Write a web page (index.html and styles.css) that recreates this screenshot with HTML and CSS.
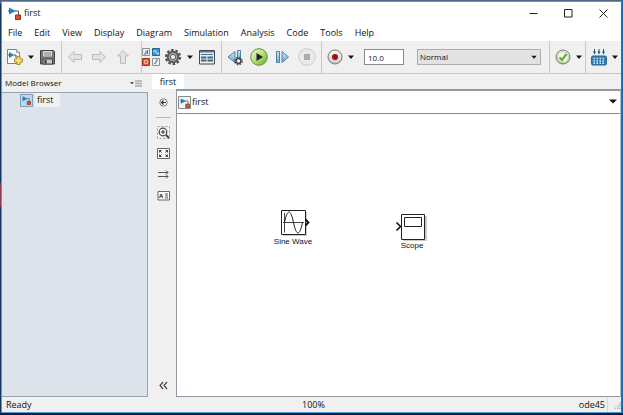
FILE: index.html
```html
<!DOCTYPE html>
<html lang="en">
<head>
<meta charset="utf-8">
<title>first</title>
<link rel="stylesheet" href="styles.css">
</head>
<body>
<svg class="defs" width="0" height="0" aria-hidden="true">
  <defs>
    <linearGradient id="blue" x1="0" y1="0" x2="0" y2="1"><stop offset="0" stop-color="#d3eaf8"/><stop offset="1" stop-color="#69a5cf"/></linearGradient>
    <linearGradient id="green" x1="0" y1="0" x2="1" y2="1"><stop offset="0" stop-color="#f4fbe8"/><stop offset=".5" stop-color="#b3df76"/><stop offset="1" stop-color="#62a82c"/></linearGradient>
    <linearGradient id="silver" x1="0" y1="0" x2="0" y2="1"><stop offset="0" stop-color="#ffffff"/><stop offset="1" stop-color="#c4c4c4"/></linearGradient>
    <symbol id="model" viewBox="0 0 13 13">
      <path d="M1 .5 8 4 1 7.500z" fill="#2583bd"/>
      <path d="M0 4h2M7 4h3.500v4" fill="none" stroke="#555" stroke-width="1"/>
      <path d="M7.500 8h5v4.500h-5z" fill="#d9532c" stroke="#8e2f17" stroke-width="1"/>
    </symbol>
    <symbol id="caret" viewBox="0 0 8 18"><path d="M1 7.500h6L4 11z" fill="#151515"/></symbol>
  </defs>
</svg>
<div class="window">
  <header class="titlebar">
    <svg class="app-icon" viewBox="0 0 13 13"><use href="#model"/></svg>
    <h1 class="title">first</h1>
    <button class="win-btn" aria-label="Minimize"><svg viewBox="0 0 9 9"><path d="M.5 4.500h8"/></svg></button>
    <button class="win-btn" aria-label="Maximize"><svg viewBox="0 0 9 9"><path d="M.5.5h7.500v7.500H.5z"/></svg></button>
    <button class="win-btn" aria-label="Close"><svg viewBox="0 0 9 9"><path d="m.5.5 8 8m0-8-8 8"/></svg></button>
  </header>
  <nav class="menubar">
    <button>File</button><button>Edit</button><button>View</button><button>Display</button><button>Diagram</button><button>Simulation</button><button>Analysis</button><button>Code</button><button>Tools</button><button>Help</button>
  </nav>
  <div class="toolbar">
    <div class="group">
      <button class="tool" aria-label="New model"><svg viewBox="0 0 18 18">
        <path d="M1.500 1.500h9l3 3v11h-12z" fill="#f8fafb" stroke="#7d8183"/><path d="M10.500 1.500v3h3" fill="#ddd" stroke="#999"/>
        <path d="m3 4 5.500 3L3 10z" fill="#2583bd"/><path d="M2 7h1.500M8 7h2v3" stroke="#555" fill="none"/>
        <path d="M11 8.500h3V11h2.500v3H14v2.500h-3V14H8.500v-3H11z" fill="#ffe26b" stroke="#b48a1c"/></svg></button>
      <button class="drop" aria-label="New options"><svg viewBox="0 0 8 18"><use href="#caret"/></svg></button>
      <button class="tool" aria-label="Save"><svg viewBox="0 0 18 18">
        <path d="M2.500 2.500h13l1 1v12.500h-14z" fill="#777" stroke="#444"/><path d="M5 3h9v5.500H5z" fill="#d8d8d8"/><path d="M6 5h7M6 7h7" stroke="#888"/><path d="M5 11h9.500v5H5z" fill="#c8c8c8" stroke="#444"/><path d="M6.500 12h2v3.500h-2z" fill="#333"/></svg></button>
    </div>
    <div class="group wide history">
      <button class="tool" aria-label="Back" disabled><svg viewBox="0 0 18 18"><path d="M2.500 9 8 3.500v3h7.500v5H8v3z" fill="#e3e3e3" stroke="#bbb"/></svg></button>
      <button class="tool" aria-label="Forward" disabled><svg viewBox="0 0 18 18"><path d="M15.500 9 10 3.500v3H2.500v5H10v3z" fill="#e3e3e3" stroke="#bbb"/></svg></button>
      <button class="tool" aria-label="Up" disabled><svg viewBox="0 0 18 18"><path d="M9 2.500 14.500 8h-3v7.500h-5V8h-3z" fill="#e3e3e3" stroke="#bbb"/></svg></button>
    </div>
    <div class="group flush">
      <button class="tool" aria-label="Library browser"><svg viewBox="0 0 18 18">
        <path d="M.5.5h7v7h-7z" fill="#e8edef" stroke="#899399"/><path d="M2 6h2V3M5.500 2v4" stroke="#667" fill="none"/>
        <path d="M10.500.5h7v7h-7z" fill="#3c9bd1" stroke="#1d6795"/><path d="M11.500 4.500q1.500-4 3 0t2.500 0" stroke="#d6eefb" fill="none"/>
        <path d="M.5 10.500h7v7h-7z" fill="#dc5b32" stroke="#9f3618"/><path d="M2.500 12.500h3v3h-3z" fill="none" stroke="#f6b49b"/>
        <path d="M10.500 10.500h7v7h-7z" fill="#eef2f4" stroke="#899399"/><path d="M12 16q2.500 0 2.500-4H16" stroke="#667" fill="none"/></svg></button>
      <button class="tool" aria-label="Model configuration"><svg viewBox="0 0 18 18">
        <circle cx="9" cy="9" r="7" fill="none" stroke="#4f4f4f" stroke-width="2.200" stroke-dasharray="2.600 1.798"/><circle cx="9" cy="9" r="5.200" fill="#aaa" stroke="#5c5c5c" stroke-width="2"/><circle cx="9" cy="9" r="2.600" fill="#f0f0f0" stroke="#555"/></svg></button>
      <button class="drop" aria-label="Configuration options"><svg viewBox="0 0 8 18"><use href="#caret"/></svg></button>
      <button class="tool" aria-label="Model explorer"><svg viewBox="0 0 18 18">
        <path d="M1.500 2.500h15v13.500h-15z" fill="#e9eef0" stroke="#42484c"/><path d="M2 3h14v1.500H2z" fill="#66747c"/><path d="M3 6.500h12" stroke="#44748f"/><path d="M3 9.500h5.500m1 0H15M3 12.500h5.500m1 0H15" stroke="#41667c" stroke-width="2"/></svg></button>
    </div>
    <div class="group wide">
      <button class="tool" aria-label="Step back"><svg viewBox="0 0 18 18">
        <path d="M9 3.500v11L2 9z" fill="url(#blue)" stroke="#4683ad"/><path d="M11.500 2.500h3v9h-3z" fill="url(#blue)" stroke="#4683ad"/>
        <circle cx="12.500" cy="13" r="3.600" fill="none" stroke="#444" stroke-width="1.400" stroke-dasharray="1.700 1.127"/><circle cx="12.500" cy="13" r="2.400" fill="#eee" stroke="#444" stroke-width="1.400"/></svg></button>
      <button class="tool" aria-label="Run"><svg viewBox="0 0 18 18"><circle cx="9" cy="9" r="8.300" fill="url(#green)" stroke="#67922f"/><path d="m6.500 5 6.500 4-6.500 4z" fill="#222"/></svg></button>
      <button class="tool" aria-label="Step forward"><svg viewBox="0 0 18 18"><path d="M2.500 3.500h3v11h-3z" fill="url(#blue)" stroke="#4683ad"/><path d="m8 3.500 6.500 5.500L8 14.500z" fill="url(#blue)" stroke="#4683ad"/></svg></button>
      <button class="tool" aria-label="Stop" disabled><svg viewBox="0 0 18 18"><circle cx="9" cy="9" r="8.300" fill="#eaeaea" stroke="#ccc"/><path d="M6 6h6v6H6z" fill="#aaa"/></svg></button>
    </div>
    <div class="group run-settings">
      <button class="tool" aria-label="Record"><svg viewBox="0 0 18 18"><circle cx="9" cy="9" r="7" fill="url(#silver)" stroke="#777"/><circle cx="9" cy="9" r="3" fill="#a60e10"/></svg></button>
      <button class="drop" aria-label="Record options"><svg viewBox="0 0 8 18"><use href="#caret"/></svg></button>
      <input class="stop-time" type="text" value="10.0" aria-label="Stop time">
      <div class="mode">
        <select aria-label="Simulation mode"><option>Normal</option></select>
        <svg viewBox="0 0 8 18"><use href="#caret"/></svg>
      </div>
    </div>
    <div class="group tight">
      <button class="tool" aria-label="Model advisor"><svg viewBox="0 0 18 18"><circle cx="9" cy="9" r="7" fill="url(#silver)" stroke="#777"/><circle cx="9" cy="9" r="5.400" fill="#f3f9ec" stroke="#b5d88d"/><path d="m5.500 9.500 2.500 2.500L12.500 6" fill="none" stroke="#6eaa2c" stroke-width="2.200"/></svg></button>
      <button class="drop" aria-label="Advisor options"><svg viewBox="0 0 8 18"><use href="#caret"/></svg></button>
    </div>
    <div class="group tight last">
      <button class="tool" aria-label="Build model"><svg viewBox="0 0 18 18">
        <path d="M4.500 1v4M9 1v4M13.500 1v4" stroke="#24567f"/><path d="M3 3.500h3l-1.500 3zM7.500 3.500h3L9 6.500zM12 3.500h3l-1.500 3z" fill="#24567f"/>
        <rect x="1.500" y="8" width="15" height="9" rx="1.500" fill="#317fb8" stroke="#286493"/><path d="M3.500 10.500h12M3.500 13h12M3.500 15.300h12" stroke="#d5ecfb" stroke-width="1.500" stroke-dasharray="1.500 1.500"/></svg></button>
      <button class="drop" aria-label="Build options"><svg viewBox="0 0 8 18"><use href="#caret"/></svg></button>
    </div>
  </div>
  <main class="workspace">
    <aside class="browser">
      <div class="browser-head">
        <h2>Model Browser</h2>
        <button class="browser-menu" aria-label="Model browser menu"><svg viewBox="0 0 14 9"><path d="M1 3h4L3 5.500z" fill="#555"/><path d="M6 2h7M6 4.500h7M6 7h7" stroke="#aaa" stroke-width="1.500"/></svg></button>
      </div>
      <div class="tree">
        <a class="tree-item" href="#first">
          <svg viewBox="0 0 13 13"><path d="M.5.5h12v12H.5z" fill="#bad8f0" stroke="#7d9fbf"/><use href="#model" x="2" y="2" width="9" height="9"/></svg>
          <span>first</span>
        </a>
      </div>
    </aside>
    <section class="editor">
      <div class="tabs"><button class="tab">first</button></div>
      <div class="editor-body">
        <div class="palette">
          <button aria-label="Hide explorer bar"><svg viewBox="0 0 13 13"><circle cx="6.500" cy="6.500" r="3.700" fill="#fafafa" stroke="#777"/><path d="M9 6.500H4.500M6.500 4.500l-2 2 2 2" stroke="#333" fill="none" stroke-width="1.200"/></svg></button>
          <hr>
          <button aria-label="Zoom"><svg viewBox="0 0 13 13"><path d="M.5.5h12v12H.5z" fill="none" stroke="#999" stroke-dasharray="2 2"/><circle cx="6" cy="6" r="3.800" fill="#f3f3f3" stroke="#444" stroke-width="1.200"/><path d="M4 6h4M6 4v4" stroke="#333"/><path d="m9 9 3 3" stroke="#444" stroke-width="1.800"/></svg></button>
          <button aria-label="Fit to view"><svg viewBox="0 0 13 13"><path d="M.5 1.500h12v10H.5z" fill="#fafafa" stroke="#666"/><path d="M2.500 5.500v-2h2M8.500 3.500h2v2M10.500 7.500v2h-2M4.500 9.500h-2v-2M2.500 3.500l2 2M10.500 3.500l-2 2M10.500 9.500l-2-2M2.500 9.500l2-2" fill="none" stroke="#444"/></svg></button>
          <button aria-label="Sample time"><svg viewBox="0 0 13 13"><path d="M1 4.500h10M1 8.500h10M9 2.500l2 2-2 2M9 6.500l2 2-2 2" fill="none" stroke="#555"/></svg></button>
          <button aria-label="Annotation"><svg viewBox="0 0 13 13"><path d="M1 2.500h11.500v8.500H1z" fill="#fafafa" stroke="#666"/><path d="M8 5h3M8 7h3M8 9h3" stroke="#555"/><text x="2" y="9" font-size="6" font-weight="700" fill="#222">A</text></svg></button>
          <button class="collapse" aria-label="Collapse palette"><svg viewBox="0 0 13 13"><path d="M6 3 3 6.500 6 10M10 3 7 6.500 10 10" fill="none" stroke="#444" stroke-width="1.200"/></svg></button>
        </div>
        <div class="diagram">
          <div class="path">
            <svg class="path-icon" viewBox="0 0 13 13"><path d="M.5.5h12v12H.5z" fill="#f4f4f4" stroke="#8a8a8a"/><use href="#model" x="2" y="2" width="10" height="10"/></svg>
            <a href="#first">first</a>
            <button class="drop" aria-label="Path history"><svg viewBox="0 0 8 18"><path d="M0 6.500h8l-4 4z" fill="#111"/></svg></button>
          </div>
          <div class="canvas">
            <figure class="block sine">
              <svg viewBox="0 0 36 28"><path d="M7 3h24v24H7z" fill="#ccc"/><path d="M5.500 1.500h24v24h-24z" fill="#fff" stroke="#222"/><path d="M8.500 4v19.500M7 13.500h21" stroke="#444" fill="none"/><path d="M8.500 13.500c3-14 6-14 9 0s6 14 9 0" stroke="#222" fill="none"/><path d="m29.500 10.500 3 3-3 3" fill="none" stroke="#111" stroke-width="1.800"/></svg>
              <figcaption>Sine Wave</figcaption>
            </figure>
            <figure class="block scope">
              <svg viewBox="0 0 36 28"><path d="M8 3h24v25H8z" fill="#ccc"/><path d="M6.500 1.500h23v25h-23z" fill="#fff" stroke="#222"/><path d="M9.500 4.500h17v9h-17z" fill="#fff" stroke="#222"/><path d="m1.500 9.500 4 4-4 4" fill="none" stroke="#111" stroke-width="1.600"/></svg>
              <figcaption>Scope</figcaption>
            </figure>
          </div>
        </div>
      </div>
    </section>
  </main>
  <footer class="status">
    <span>Ready</span><span>100%</span>
    <div class="status-end">
      <span class="solver">ode45</span>
      <svg class="grip" viewBox="0 0 10 10"><path d="M8 2h2v2H8zM5 5h2v2H5zM8 5h2v2H8zM2 8h2v2H2zM5 8h2v2H5zM8 8h2v2H8z" fill="#bbb"/></svg>
    </div>
  </footer>
</div>
</body>
</html>
```
FILE: styles.css
```css
* { box-sizing: border-box; }

body {
  margin: 0;
  height: 100vh;
  padding: 1px 1px 2px;
  background:
    linear-gradient(#0a1e44, #0a1e44) bottom / 100% 2px no-repeat,
    linear-gradient(#1767b5, #1767b5) right / 1px 100% no-repeat,
    linear-gradient(#4d6987 0 1%, #123861 1% 44%, #8c3b50 44% 50%, #123861 50% 100%);
  font: 9px/14px "Open Sans", "Noto Sans", sans-serif;
  color: #111;
}

.defs { position: absolute; }

button, input, select { font: inherit; color: inherit; }
button { border: 0; padding: 0; background: none; }
svg { display: block; }
a { color: inherit; text-decoration: none; }
h1, h2, figure { margin: 0; font: inherit; }

.window {
  height: 100%;
  display: flex;
  flex-direction: column;
  background: #f0f0f0;
  border: 1px solid #4f9bd9;
  border-right-color: #1976c9;
}

.titlebar { display: flex; align-items: center; height: 22px; padding-left: 6px; background: #fff; }
.app-icon { width: 13px; height: 13px; }
.title { flex: 1; padding-left: 3px; }
.win-btn { width: 35px; height: 20px; display: grid; place-items: center; }
.win-btn svg { width: 9px; height: 9px; fill: none; stroke: #222; }

.menubar { display: flex; gap: 12px; height: 17px; padding-left: 6px; background: #fff; }

.toolbar { display: flex; height: 33px; border-bottom: 1px solid #c6c6c6; }
.group { display: flex; align-items: center; gap: 3px; padding: 0 5px 0 4px; border-right: 1px solid #c9c9c9; }
.group.wide { gap: 6px; }
.group.history { padding-right: 9px; }
.group.flush { gap: 4px; padding-left: 0; }
.group.tight { padding-right: 2px; }
.group.last { border-right: 0; }
.run-settings { flex: 1; padding-right: 8px; }
.tool, .tool svg { width: 18px; height: 18px; }
.drop, .drop svg { width: 8px; height: 18px; }
.stop-time { width: 40px; height: 16px; margin-left: 6px; padding: 0 3px; border: 1px solid #8b8b8b; background: #fff; font-size: 8px; }
.mode { position: relative; flex: 1; margin-left: 10px; }
.mode select { display: block; width: 100%; height: 16px; padding: 0 2px; appearance: none; border: 1px solid #adadad; border-radius: 0; background: #e2e2e2; font-size: 8px; }
.mode svg { position: absolute; right: 3px; top: 0; width: 8px; height: 16px; pointer-events: none; }

.workspace { flex: 1; min-height: 0; display: grid; grid-template-columns: 146px 1fr; gap: 4px; }
.browser { display: flex; flex-direction: column; }
.browser-head { display: flex; align-items: center; justify-content: space-between; height: 18px; padding: 0 5px 0 3px; font-size: 8px; }
.browser-menu svg { width: 14px; height: 9px; }
.tree { flex: 1; padding-left: 16px; background: #dce3eb; border: 1px solid #9aa2ac; border-left: 0; }
.tree-item { display: inline-flex; align-items: center; gap: 2px; height: 14px; padding-left: 2px; }
.tree-item svg { width: 13px; height: 13px; }
.tree-item span { padding: 0 7px 0 2px; background: #f1f1f1; }

.editor { display: flex; flex-direction: column; min-width: 0; }
.tabs { display: flex; height: 15px; }
.tab { width: 32px; background: #fff; }
.editor-body { flex: 1; display: flex; }
.palette { width: 24px; display: flex; flex-direction: column; align-items: center; gap: 8px; padding: 7px 2px 5px 0; }
.palette button, .palette svg { width: 13px; height: 13px; }
.palette hr { width: 15px; height: 1px; margin: 0; border: 0; background: #bbb; }
.palette .collapse { margin-top: auto; }
.diagram { flex: 1; display: flex; flex-direction: column; background: #fff; border: 1px solid #9297a0; border-top-width: 2px; border-right-color: #b8bcc4; }
.path { display: flex; align-items: center; gap: 1px; height: 23px; padding: 0 3px 0 1px; border-bottom: 1px solid #858a92; }
.path-icon { width: 13px; height: 13px; }
.path a { flex: 1; }

.canvas { position: relative; flex: 1; }
.block { position: absolute; width: 40px; text-align: center; font: 8px/9px "Liberation Sans", sans-serif; }
.block svg { width: 36px; height: 28px; margin-left: 3px; }
.sine { left: 96px; top: 95px; }
.scope { left: 215px; top: 99px; }

.status { display: grid; grid-template-columns: 1fr auto 1fr; align-items: center; height: 15px; padding-left: 4px; }
.status-end { display: flex; align-items: center; justify-content: flex-end; gap: 5px; }
.solver { padding-right: 2px; border-right: 1px solid #d8d8d8; }
.grip { width: 8px; height: 8px; }
```
